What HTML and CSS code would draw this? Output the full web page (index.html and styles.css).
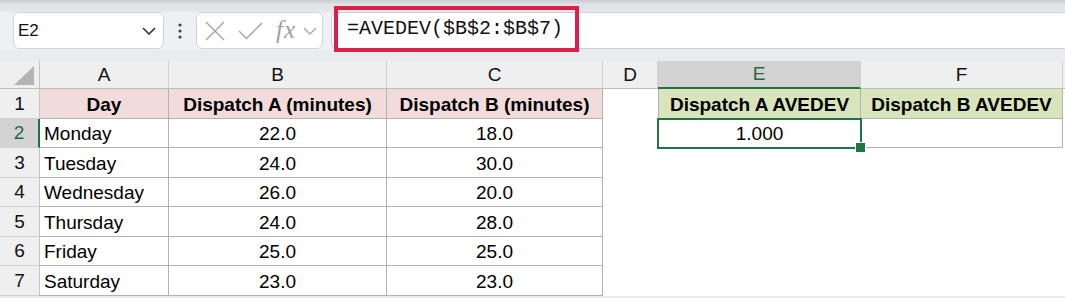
FILE: index.html
```html
<!DOCTYPE html>
<html>
<head>
<meta charset="utf-8">
<link rel="stylesheet" href="styles.css">
</head>
<body>
<div class="top"></div>
<div class="fbar">
  <div class="namebox">
    <span class="nb-text">E2</span>
    <svg class="chev" width="14" height="8" viewBox="0 0 14 8"><path d="M1 1 L7 7 L13 1" fill="none" stroke="#333" stroke-width="1.6"/></svg>
  </div>
  <div class="dots">
    <svg width="4" height="16" viewBox="0 0 4 16"><circle cx="2" cy="2" r="1.6" fill="#444"/><circle cx="2" cy="8" r="1.6" fill="#444"/><circle cx="2" cy="14" r="1.6" fill="#444"/></svg>
  </div>
  <div class="btns">
    <svg class="ico-x" width="20" height="20" viewBox="0 0 20 20"><path d="M1 1 L19 19 M19 1 L1 19" stroke="#a8a8a8" stroke-width="1.5" fill="none"/></svg>
    <svg class="ico-ok" width="25" height="18" viewBox="0 0 25 18"><path d="M1 9 L8.5 16.5 L24 1" stroke="#a8a8a8" stroke-width="1.5" fill="none"/></svg>
    <span class="fx">fx</span>
    <svg class="chev2" width="14" height="8" viewBox="0 0 14 8"><path d="M1 1 L7 7 L13 1" fill="none" stroke="#a8a8a8" stroke-width="1.4"/></svg>
  </div>
  <div class="finput">
    <div class="formula">=AVEDEV($B$2:$B$7)</div>
  </div>
</div>
<div class="gap"></div>
<div class="sheet">
  <div class="corner"><svg width="20" height="19" viewBox="0 0 20 19"><path d="M20 0 L20 19 L0 19 Z" fill="#b4b4b4"/></svg></div>
  <div class="ch">A</div>
  <div class="ch">B</div>
  <div class="ch">C</div>
  <div class="ch">D</div>
  <div class="ch sel">E</div>
  <div class="ch">F</div>
  <div class="ch end"></div>

  <div class="rh">1</div>
  <div class="t pink">Day</div>
  <div class="t pink">Dispatch A (minutes)</div>
  <div class="t pink">Dispatch B (minutes)</div>
  <div class="c"></div>
  <div class="t green eleft">Dispatch A AVEDEV</div>
  <div class="t green">Dispatch B AVEDEV</div>
  <div class="c"></div>

  <div class="rh sel">2</div>
  <div class="t txt">Monday</div>
  <div class="t num">22.0</div>
  <div class="t num">18.0</div>
  <div class="c"></div>
  <div class="t num eleft active">1.000</div>
  <div class="t"></div>
  <div class="c"></div>

  <div class="rh">3</div>
  <div class="t txt">Tuesday</div>
  <div class="t num">24.0</div>
  <div class="t num">30.0</div>
  <div class="c"></div><div class="c"></div><div class="c"></div><div class="c"></div>

  <div class="rh">4</div>
  <div class="t txt">Wednesday</div>
  <div class="t num">26.0</div>
  <div class="t num">20.0</div>
  <div class="c"></div><div class="c"></div><div class="c"></div><div class="c"></div>

  <div class="rh">5</div>
  <div class="t txt">Thursday</div>
  <div class="t num">24.0</div>
  <div class="t num">28.0</div>
  <div class="c"></div><div class="c"></div><div class="c"></div><div class="c"></div>

  <div class="rh">6</div>
  <div class="t txt">Friday</div>
  <div class="t num">25.0</div>
  <div class="t num">25.0</div>
  <div class="c"></div><div class="c"></div><div class="c"></div><div class="c"></div>

  <div class="rh">7</div>
  <div class="t txt">Saturday</div>
  <div class="t num">23.0</div>
  <div class="t num">23.0</div>
  <div class="c"></div><div class="c"></div><div class="c"></div><div class="c"></div>
</div>
</body>
</html>
```
FILE: styles.css
```css
* { box-sizing: border-box; }
html, body { margin: 0; padding: 0; }
body {
  width: 1065px;
  height: 298px;
  overflow: hidden;
  background: #e9ecef;
  font-family: "Liberation Sans", Arial, sans-serif;
  color: #000;
}
.top {
  height: 12px;
  background: linear-gradient(#c9ccd0 0px, #dde0e4 4px, #e6e9ec 12px);
}
.fbar {
  height: 38px;
  display: flex;
  align-items: stretch;
  background: #eef0f3;
  padding-left: 13px;
}
.namebox {
  width: 151px;
  height: 37px;
  background: #fff;
  border: 1px solid #d3d3d3;
  border-radius: 6px;
  display: flex;
  align-items: center;
  padding-left: 4px;
  padding-right: 7px;
}
.nb-text { font-size: 17px; color: #111; flex: 1; }
.chev { display: block; }
.dots {
  width: 32px;
  display: flex;
  align-items: center;
  justify-content: center;
}
.dots svg { display: block; }
.btns {
  width: 127px;
  height: 37px;
  background: #fff;
  border: 1px solid #d3d3d3;
  border-radius: 6px;
  display: flex;
  align-items: center;
  padding-left: 8px;
}
.ico-x { margin-right: 13px; }
.ico-ok { margin-right: 13px; }
.fx {
  font-family: "Liberation Serif", "Times New Roman", serif;
  font-style: italic;
  font-size: 25px;
  color: #a0a0a0;
  letter-spacing: 1px;
  margin-right: 7px;
  line-height: 1;
  margin-top: -2px;
}
.finput {
  flex: 1;
  margin-left: 8px;
  background: #fff;
  border: 1px solid #cfcfcf;
  border-right: none;
  border-radius: 6px 0 0 6px;
  height: 37px;
  padding-left: 2px;
}
.formula {
  width: 245px;
  height: 46px;
  margin-top: -7px;
  border: 4px solid #dc1f48;
  font-family: "Liberation Mono", "Courier New", monospace;
  font-size: 20px;
  line-height: 38px;
  padding-left: 9px;
  color: #111;
  white-space: nowrap;
}
.gap { height: 11px; }
.sheet {
  display: grid;
  grid-template-columns: 40px 129px 218px 216px 55px 203px 202px 2px;
  grid-template-rows: 28px 30px 29px 30px 29px 30px 29px 30px;
  background: #fff;
  font-size: 19px;
}
.corner {
  background: #efefef;
  border-right: 1px solid #c4c4c4;
  border-bottom: 1px solid #bdbdbd;
  display: flex;
  align-items: flex-end;
  justify-content: flex-end;
  padding: 0 5px 3px 0;
}
.corner svg { display: block; }
.ch {
  background: #efefef;
  border-right: 1px solid #d0d0d0;
  border-bottom: 1px solid #bdbdbd;
  display: flex;
  align-items: center;
  justify-content: center;
  color: #111;
}
.ch.sel {
  background: #d3d3d3;
  color: #1d6b3e;
  border-bottom: 2px solid #217346;
}
.ch.end { border-right: none; }
.rh {
  background: #efefef;
  border-right: 1px solid #c4c4c4;
  border-bottom: 1px solid #d0d0d0;
  display: flex;
  align-items: center;
  justify-content: center;
  color: #111;
}
.rh.sel {
  background: #d3d3d3;
  color: #1d6b3e;
  border-right: 2px solid #217346;
}
.c { background: #fff; }
.t {
  border-right: 1px solid #b2b2b2;
  border-bottom: 1px solid #b2b2b2;
  display: flex;
  align-items: center;
  white-space: nowrap;
  padding-top: 2px;
}
.eleft { border-left: 1px solid #b2b2b2; }
.pink {
  background: #f2dcdb;
  font-weight: bold;
  justify-content: center;
}
.green {
  background: #d8e4bc;
  font-weight: bold;
  justify-content: center;
}
.txt { padding-left: 4px; }
.num { justify-content: center; }
.active { position: relative; }
.active::after {
  content: "";
  position: absolute;
  top: -1px;
  left: -2px;
  right: -2px;
  bottom: -2px;
  border: 2px solid #217346;
}
.active::before {
  content: "";
  position: absolute;
  right: -6px;
  bottom: -6px;
  width: 9px;
  height: 9px;
  background: #217346;
  border: 1px solid #fff;
  z-index: 2;
}
```
